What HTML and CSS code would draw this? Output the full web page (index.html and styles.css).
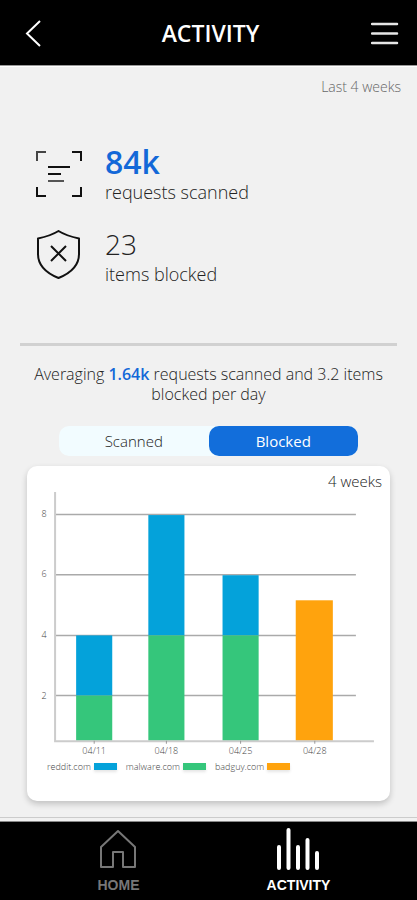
FILE: index.html
```html
<!DOCTYPE html>
<html lang="en">
<head>
    <meta charset="UTF-8">
    <meta name="viewport" content="width=device-width, initial-scale=1.0">
    <title>Activity</title>
    <link rel="stylesheet" href="styles.css">
</head>
<body>

    <header class="topbar">
        <button type="button" aria-label="Back">
            <svg width="26" height="30" viewBox="0 0 26 30" fill="none" stroke="#fff" stroke-width="2">
                <path d="M16 3 L3 15.500 L16 28"/>
            </svg>
        </button>
        <h1>ACTIVITY</h1>
        <button type="button" aria-label="Menu">
            <svg width="28" height="24" viewBox="0 0 28 24" fill="none" stroke="#e6e6e6" stroke-width="2.500" stroke-linecap="round">
                <path d="M1 3 H26 M1 12.500 H26 M1 22 H26"/>
            </svg>
        </button>
    </header>

    <main>
        <p class="period">Last 4 weeks</p>

        <section class="stats">
            <div class="stat">
                <svg width="48" height="48" viewBox="0 0 48 48" fill="none" stroke="#111" stroke-width="2">
                    <path d="M2 11 V2 H11" stroke="#444"/>
                    <path d="M37 2 H46 V11 M46 37 V46 H37 M11 46 H2 V37"/>
                    <path d="M13 17 H35 M13 24 H26"/>
                    <path d="M13 31 H29" stroke="#555"/>
                </svg>
                <div>
                    <p class="number main">84k</p>
                    <p class="label">requests scanned</p>
                </div>
            </div>
            <div class="stat">
                <svg width="48" height="52" viewBox="0 0 48 52" fill="none" stroke="#111" stroke-width="2" stroke-linejoin="round">
                    <path d="M23.500 1 C17 5 10 7 3 8.500 V24 C3 36 11 43 23.500 48 C36 43 44 36 44 24 V8.500 C37 7 30 5 23.500 1 Z"/>
                    <path d="M16 16 L31 31 M31 16 L16 31"/>
                </svg>
                <div>
                    <p class="number">23</p>
                    <p class="label">items blocked</p>
                </div>
            </div>
        </section>

        <hr>

        <p class="average">Averaging <b>1.64k</b> requests scanned and 3.2 items blocked per day</p>

        <div class="tabs">
            <button type="button">Scanned</button>
            <button class="active" type="button">Blocked</button>
        </div>

        <section class="card">
            <p class="range">4 weeks</p>
            <svg class="chart" viewBox="0 0 362 268" role="img" aria-label="Blocked items per week">
                <g stroke="#aaa" stroke-width="1.500">
                    <path d="M28 23.500 H328 M28 83.500 H328 M28 144 H328 M28 204 H328"/>
                </g>
                <g fill="#04a2da">
                    <rect x="49" y="144" width="36" height="60"/>
                    <rect x="121" y="24" width="36" height="120"/>
                    <rect x="195" y="84" width="36" height="60"/>
                </g>
                <g fill="#35c67b">
                    <rect x="49" y="204" width="36" height="45"/>
                    <rect x="121" y="144" width="36" height="105"/>
                    <rect x="195" y="144" width="36" height="105"/>
                </g>
                <rect x="268" y="109" width="37" height="140" fill="#ffa30d"/>
                <path d="M28 1 V249.500 H346" fill="none" stroke="#ccc" stroke-width="2"/>
                <path d="M67 249 V252 M139 249 V252 M213 249 V252 M287 249 V252" stroke="#999"/>
                <g class="ticks" text-anchor="middle">
                    <text x="17" y="26">8</text>
                    <text x="17" y="86">6</text>
                    <text x="17" y="147">4</text>
                    <text x="17" y="207">2</text>
                    <text x="67" y="262">04/11</text>
                    <text x="139" y="262">04/18</text>
                    <text x="213" y="262">04/25</text>
                    <text x="287" y="262">04/28</text>
                </g>
            </svg>
            <ul class="legend">
                <li>reddit.com <i class="swatch blue"></i></li>
                <li>malware.com <i class="swatch green"></i></li>
                <li>badguy.com <i class="swatch orange"></i></li>
            </ul>
        </section>
    </main>

    <nav class="bottombar">
        <a href="#home">
            <svg width="40" height="44" viewBox="0 0 40 44" fill="none" stroke="#777" stroke-width="2" stroke-linejoin="round">
                <path d="M19 4 L36 20 V40 H24 V25 H14 V40 H2 V20 Z"/>
            </svg>
            HOME
        </a>
        <a class="active" href="#activity">
            <svg width="46" height="44" viewBox="0 0 46 44" fill="none" stroke="#fff" stroke-width="4" stroke-linecap="round">
                <path d="M3 20 V41 M12.500 3 V41 M22 20 V41 M31.500 13 V41 M41 26 V41"/>
            </svg>
            ACTIVITY
        </a>
    </nav>

</body>
</html>
```
FILE: styles.css
```css
* {
    margin: 0;
    padding: 0;
    box-sizing: border-box;
}

body {
    display: flex;
    flex-direction: column;
    min-height: 100vh;
    background-color: #f1f1f1;
    color: #222;
    font-family: "Open Sans", "Noto Sans", sans-serif;
    font-weight: 300;
}

button {
    border: none;
    background: none;
    font: inherit;
    color: inherit;
}

svg {
    display: block;
}

.topbar {
    display: flex;
    align-items: center;
    justify-content: space-between;
    height: 66px;
    padding: 0 18px 0 24px;
    background-color: #000;
    border-bottom: 1px solid #999;
}

.topbar h1 {
    color: #fff;
    font-size: 23px;
    font-weight: 600;
}

main {
    flex: 1;
    border-top: 1px solid #fff;
    border-bottom: 1px solid #ccc;
}

.period {
    padding: 10px 16px 0;
    text-align: right;
    color: #666;
    font-size: 14px;
    line-height: 20px;
}

.stats {
    display: grid;
    gap: 22px;
    padding: 47px 35px 57px;
}

.stat {
    display: flex;
    align-items: center;
    gap: 22px;
}

.number {
    font-size: 28px;
    line-height: 36px;
}

.number.main {
    color: #1368d8;
    font-size: 32px;
    font-weight: 600;
}

.label {
    font-size: 18px;
    line-height: 24px;
}

hr {
    height: 3px;
    margin: 0 20px;
    border: none;
    background-color: #d1d1d1;
}

.average {
    padding: 18px 24px;
    text-align: center;
    font-size: 16px;
    line-height: 20px;
}

.average b {
    color: #1368d8;
    font-weight: 600;
}

.tabs {
    display: flex;
    margin: 4px 59px 10px;
    border-radius: 10px;
    background-color: #f2fcff;
}

.tabs button {
    flex: 1;
    height: 30px;
    border-radius: 10px;
    font-size: 15px;
}

.tabs .active {
    background-color: #126edb;
    color: #fff;
    font-weight: 400;
}

.card {
    margin: 0 27px 15px;
    padding-bottom: 28px;
    border-radius: 10px;
    background-color: #fff;
    box-shadow: 0 3px 6px rgba(0, 0, 0, 0.2);
}

.range {
    padding: 5px 8px 0;
    text-align: right;
    font-size: 15px;
    line-height: 20px;
}

.chart {
    width: 100%;
}

.ticks {
    fill: #444;
    font-size: 9px;
}

.legend {
    display: flex;
    gap: 9px;
    padding: 1px 0 0 20px;
    list-style: none;
    color: #444;
    font-size: 9px;
    line-height: 12px;
}

.legend li {
    display: flex;
    align-items: center;
    gap: 3px;
}

.swatch {
    width: 23px;
    height: 7px;
    box-shadow: 0 2px 3px rgba(0, 0, 0, 0.1);
}

.blue {
    background-color: #04a2da;
}

.green {
    background-color: #35c67b;
}

.orange {
    background-color: #ffa30d;
}

.bottombar {
    display: flex;
    justify-content: center;
    gap: 60px;
    height: 79px;
    margin-top: 3px;
    background-color: #000;
    border-top: 1px solid #888;
}

.bottombar a {
    display: flex;
    flex-direction: column;
    align-items: center;
    gap: 6px;
    width: 120px;
    padding-top: 5px;
    color: #777;
    font-family: "Liberation Sans", Arial, sans-serif;
    font-size: 14px;
    font-weight: bold;
    text-decoration: none;
}

.bottombar .active {
    color: #fff;
}
```
